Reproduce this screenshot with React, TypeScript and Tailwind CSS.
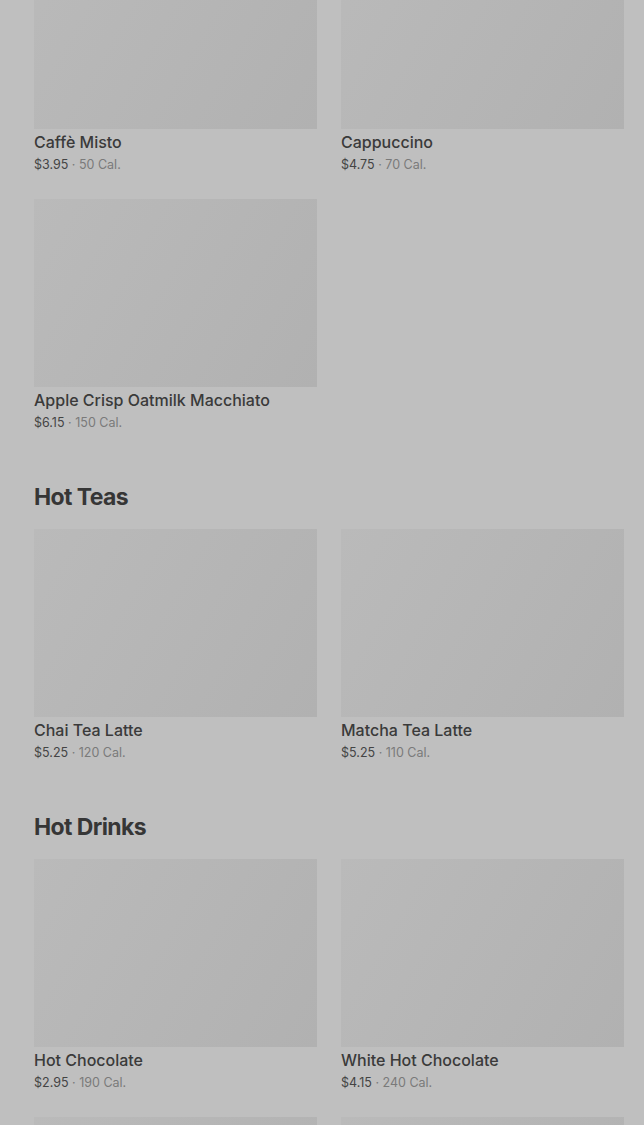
type Item = {
  name: string;
  price: string;
  cal: string;
};

type Section = {
  title?: string;
  items: Item[];
};

const sections: Section[] = [
  {
    items: [
      { name: "Caffè Misto", price: "$3.95", cal: "50 Cal." },
      { name: "Cappuccino", price: "$4.75", cal: "70 Cal." },
      { name: "Apple Crisp Oatmilk Macchiato", price: "$6.15", cal: "150 Cal." },
    ],
  },
  {
    title: "Hot Teas",
    items: [
      { name: "Chai Tea Latte", price: "$5.25", cal: "120 Cal." },
      { name: "Matcha Tea Latte", price: "$5.25", cal: "110 Cal." },
    ],
  },
  {
    title: "Hot Drinks",
    items: [
      { name: "Hot Chocolate", price: "$2.95", cal: "190 Cal." },
      { name: "White Hot Chocolate", price: "$4.15", cal: "240 Cal." },
      { name: "Steamed Milk", price: "$2.45", cal: "160 Cal." },
      { name: "Vanilla Crème", price: "$3.45", cal: "200 Cal." },
    ],
  },
];

function Card({ item }: { item: Item }) {
  return (
    <div className="flex flex-col">
      <div className="h-[188px] bg-[linear-gradient(120deg,#bababa,#b1b1b1)]" />
      <div className="mt-[3px] text-[16px] leading-[20px] font-medium text-[#3a3a3a]">
        {item.name}
      </div>
      <div className="mt-[4px] text-[12.5px] leading-[18px]">
        <span className="text-[#444444]">{item.price}</span>
        <span className="text-[#7a7a7a]"> · {item.cal}</span>
      </div>
    </div>
  );
}

export default function App() {
  return (
    <div
      className="h-[1125px] overflow-hidden bg-[#bfbfbf]"
      style={{ fontFamily: "Inter, 'Noto Sans', sans-serif" }}
    >
      <div className="-mt-[59px] pl-[34px] pr-[20px]">
        {sections.map((section, i) => (
          <div key={i} className={i > 0 ? "mt-[49px]" : ""}>
            {section.title && (
              <h2 className="mb-[16px] text-[23px] leading-[32px] font-bold tracking-[-0.6px] text-[#363636]">
                {section.title}
              </h2>
            )}
            <div className="grid grid-cols-2 gap-x-[24px] gap-y-[25px]">
              {section.items.map((item) => (
                <Card key={item.name} item={item} />
              ))}
            </div>
          </div>
        ))}
      </div>
    </div>
  );
}
